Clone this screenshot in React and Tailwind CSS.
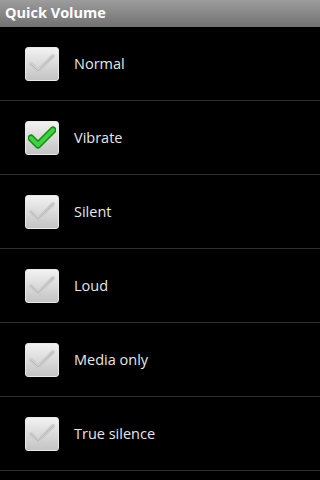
import React, { useState } from 'react';

const modes = ['Normal', 'Vibrate', 'Silent', 'Loud', 'Media only', 'True silence'];

const CheckBox = ({ checked }) => (
    <div className="w-[34px] h-[34px] rounded-[3px] border border-[#e8e8e8] bg-gradient-to-b from-[#f2f2f2] to-[#c4c4c4] flex items-center justify-center shadow-[0_0_2px_#000]">
        <svg width="28" height="24" viewBox="0 0 28 24">
            {checked ? (
                <path
                    d="M3 12 L10 19 L25 4"
                    fill="none"
                    stroke="#158a15"
                    strokeWidth="7"
                    strokeLinecap="round"
                    strokeLinejoin="round"
                />
            ) : null}
            <path
                d="M3 12 L10 19 L25 4"
                fill="none"
                stroke={checked ? '#3fd43f' : '#cdcdcd'}
                strokeWidth="4"
                strokeLinecap="round"
                strokeLinejoin="round"
            />
            {!checked ? (
                <path
                    d="M3 12 L10 19 L25 4"
                    fill="none"
                    stroke="#b9b9b9"
                    strokeWidth="1"
                    strokeLinecap="round"
                    strokeLinejoin="round"
                />
            ) : null}
        </svg>
    </div>
);

export default function App() {
    const [selected, setSelected] = useState('Vibrate');
    return (
        <div className="w-[320px] h-[480px] bg-black overflow-hidden" style={{ fontFamily: '"Open Sans", "Noto Sans", sans-serif' }}>
            <div className="h-[27px] bg-gradient-to-b from-[#9c9c9c] to-[#727272] flex items-center pl-[5px]">
                <span className="text-white font-bold text-[14.5px] leading-none">Quick Volume</span>
            </div>
            {modes.map((mode) => (
                <div
                    key={mode}
                    onClick={() => setSelected(mode)}
                    className="h-[74px] border-b border-[#2e2e2e] flex items-center pl-[25px] gap-[15px]"
                >
                    <CheckBox checked={selected === mode} />
                    <span className="text-[#e6e6e6] text-[14.5px] pt-[1px]">{mode}</span>
                </div>
            ))}
        </div>
    );
}
